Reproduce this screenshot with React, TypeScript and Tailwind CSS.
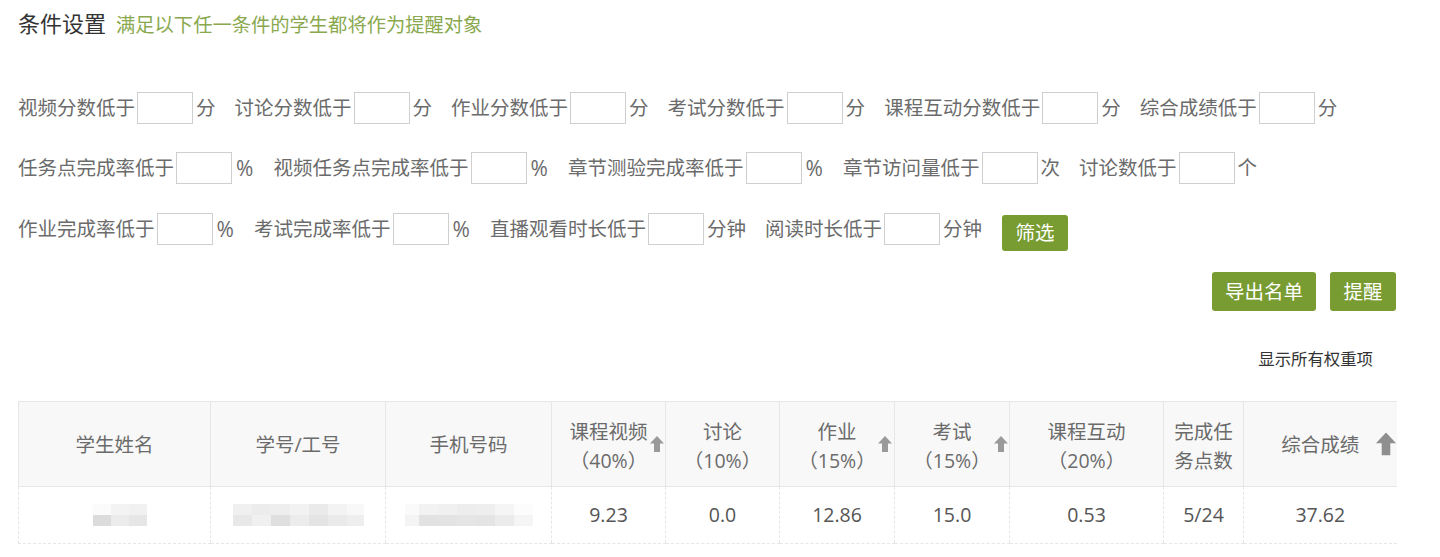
import React from "react";

type Group = { label: string; unit: string };

const rows: Group[][] = [
  [
    { label: "视频分数低于", unit: "分" },
    { label: "讨论分数低于", unit: "分" },
    { label: "作业分数低于", unit: "分" },
    { label: "考试分数低于", unit: "分" },
    { label: "课程互动分数低于", unit: "分" },
    { label: "综合成绩低于", unit: "分" },
  ],
  [
    { label: "任务点完成率低于", unit: "%" },
    { label: "视频任务点完成率低于", unit: "%" },
    { label: "章节测验完成率低于", unit: "%" },
    { label: "章节访问量低于", unit: "次" },
    { label: "讨论数低于", unit: "个" },
  ],
  [
    { label: "作业完成率低于", unit: "%" },
    { label: "考试完成率低于", unit: "%" },
    { label: "直播观看时长低于", unit: "分钟" },
    { label: "阅读时长低于", unit: "分钟" },
  ],
];

function FilterGroup({ g }: { g: Group }) {
  return (
    <div className="flex items-center h-[32px]">
      <span className="leading-[32px] whitespace-nowrap">{g.label}</span>
      <input
        className="ml-[2px] w-[56px] h-[32px] border border-[#cfcfcf] bg-white outline-none"
        type="text"
      />
      {g.unit === "%" ? (
        <span className="ml-[4px] w-[18.5px] mr-[19px] leading-[32px] text-[21px]">%</span>
      ) : (
        <span className="ml-[3px] mr-[19px] leading-[32px] whitespace-nowrap">{g.unit}</span>
      )}
    </div>
  );
}

function SortArrow({ big }: { big?: boolean }) {
  return (
    <svg
      viewBox="0 0 14 16"
      className={big ? "w-[22px] h-[23px]" : "w-[14px] h-[16px]"}
    >
      <path d="M7 0 L14 7.5 L10 7.5 L10 16 L4 16 L4 7.5 L0 7.5 Z" fill={big ? "#8f8f8f" : "#9a9a9a"} />
    </svg>
  );
}

type Block = { w: number; c: string };

function Mosaic({ rows }: { rows: Block[][] }) {
  return (
    <div className="inline-flex flex-col">
      {rows.map((r, i) => (
        <div key={i} className="flex h-[11px]">
          {r.map((b, j) => (
            <div key={j} style={{ width: b.w, backgroundColor: b.c }} />
          ))}
        </div>
      ))}
    </div>
  );
}

const nameMosaic: Block[][] = [
  [
    { w: 18, c: "#fbfbfb" },
    { w: 18, c: "#f3f3f3" },
    { w: 18, c: "#f1f1f1" },
  ],
  [
    { w: 18, c: "#dcdcdc" },
    { w: 18, c: "#ececec" },
    { w: 18, c: "#e6e6e6" },
  ],
];

const idMosaic: Block[][] = [
  [
    { w: 19, c: "#f0f0f0" },
    { w: 19, c: "#ececec" },
    { w: 19, c: "#eeeeee" },
    { w: 19, c: "#f2f2f2" },
    { w: 19, c: "#eaeaea" },
    { w: 19, c: "#f3f3f3" },
    { w: 17, c: "#f8f8f8" },
  ],
  [
    { w: 19, c: "#e8e8e8" },
    { w: 19, c: "#f0f0f0" },
    { w: 19, c: "#dfdfdf" },
    { w: 19, c: "#ececec" },
    { w: 19, c: "#e4e4e4" },
    { w: 19, c: "#eaeaea" },
    { w: 17, c: "#eeeeee" },
  ],
];

const phoneMosaic: Block[][] = [
  [
    { w: 14, c: "#fafafa" },
    { w: 19, c: "#f2f2f2" },
    { w: 19, c: "#f0f0f0" },
    { w: 19, c: "#ededed" },
    { w: 19, c: "#eeeeee" },
    { w: 19, c: "#f5f5f5" },
    { w: 19, c: "#fcfcfc" },
  ],
  [
    { w: 14, c: "#f4f4f4" },
    { w: 19, c: "#e2e2e2" },
    { w: 19, c: "#e3e3e3" },
    { w: 19, c: "#e5e5e5" },
    { w: 19, c: "#e4e4e4" },
    { w: 19, c: "#ebebeb" },
    { w: 19, c: "#f5f5f5" },
  ],
];

const colWidths = [192, 175, 166, 114, 114, 115, 115, 154, 80, 153];

export default function App() {
  const font = { fontFamily: '"Open Sans", "Noto Sans CJK SC", sans-serif' };
  return (
    <div className="bg-white min-h-[557px] text-[#6b6b6b]" style={font}>
      <div className="ml-[18px] w-[1378px] pt-[8px]">
        {/* Title */}
        <div className="flex items-baseline h-[30px]">
          <span className="text-[22px] leading-[30px] text-[#333]">条件设置</span>
          <span className="ml-[10px] text-[19.3px] text-[#8aa94f]">满足以下任一条件的学生都将作为提醒对象</span>
        </div>

        {/* Filters */}
        <div className="text-[19.5px]">
          <div className="mt-[54px] flex">
            {rows[0].map((g) => (
              <FilterGroup key={g.label} g={g} />
            ))}
          </div>
          <div className="mt-[28px] flex">
            {rows[1].map((g) => (
              <FilterGroup key={g.label} g={g} />
            ))}
          </div>
          <div className="mt-[29px] flex items-start">
            {rows[2].map((g) => (
              <FilterGroup key={g.label} g={g} />
            ))}
            <button className="ml-[1px] mt-[2px] w-[66px] h-[36px] rounded-[3px] bg-[#789c31] text-white text-[19.5px] leading-[36px]">
              筛选
            </button>
          </div>
        </div>

        {/* Actions */}
        <div className="mt-[21px] flex justify-end gap-[14px]">
          <button className="w-[104px] h-[39px] rounded-[3px] bg-[#789c31] text-white text-[19.5px]">
            导出名单
          </button>
          <button className="w-[66px] h-[39px] rounded-[3px] bg-[#789c31] text-white text-[19.5px]">
            提醒
          </button>
        </div>

        <div className="mt-[36px] flex justify-end pr-[23px]">
          <span className="text-[16.4px] leading-[24px] text-[#333]">显示所有权重项</span>
        </div>

        {/* Table */}
        <table className="mt-[30px] w-[1378px] table-fixed border-collapse">
          <colgroup>
            {colWidths.map((w, i) => (
              <col key={i} style={{ width: w }} />
            ))}
          </colgroup>
          <thead>
            <tr className="bg-[#f8f8f8] h-[85px] text-[19.5px] leading-[29px] text-[#6b6b6b]">
              <th className="font-normal border-t border-b border-l border-[#e6e6e6]">学生姓名</th>
              <th className="font-normal border-t border-b border-l border-[#e6e6e6]">学号/工号</th>
              <th className="font-normal border-t border-b border-l border-[#e6e6e6]">手机号码</th>
              <th className="font-normal border-t border-b border-l border-[#e6e6e6] relative">
                <div className="pt-[3px]">
                  课程视频
                  <br />
                  （40%）
                </div>
                <span className="absolute right-[1px] top-1/2 -translate-y-1/2 flex">
                  <SortArrow />
                </span>
              </th>
              <th className="font-normal border-t border-b border-l border-[#e6e6e6]">
                <div className="pt-[3px]">
                  讨论
                  <br />
                  （10%）
                </div>
              </th>
              <th className="font-normal border-t border-b border-l border-[#e6e6e6] relative">
                <div className="pt-[3px]">
                  作业
                  <br />
                  （15%）
                </div>
                <span className="absolute right-[2px] top-1/2 -translate-y-1/2 flex">
                  <SortArrow />
                </span>
              </th>
              <th className="font-normal border-t border-b border-l border-[#e6e6e6] relative">
                <div className="pt-[3px]">
                  考试
                  <br />
                  （15%）
                </div>
                <span className="absolute right-[1px] top-1/2 -translate-y-1/2 flex">
                  <SortArrow />
                </span>
              </th>
              <th className="font-normal border-t border-b border-l border-[#e6e6e6]">
                <div className="pt-[3px]">
                  课程互动
                  <br />
                  （20%）
                </div>
              </th>
              <th className="font-normal border-t border-b border-l border-[#e6e6e6]">
                <div className="pt-[3px]">
                  完成任
                  <br />
                  务点数
                </div>
              </th>
              <th className="font-normal border-t border-b border-l border-[#e6e6e6] relative">
                综合成绩
                <span className="absolute right-0 top-1/2 -translate-y-1/2 flex">
                  <SortArrow big />
                </span>
              </th>
            </tr>
          </thead>
          <tbody>
            <tr className="h-[57px] text-[19.5px] text-[#555] text-center">
              <td className="border-b border-l border-dashed border-[#e6e6e6]">
                <div className="flex justify-center pl-[10px]">
                  <Mosaic rows={nameMosaic} />
                </div>
              </td>
              <td className="border-b border-l border-dashed border-[#e6e6e6]">
                <div className="flex justify-center">
                  <Mosaic rows={idMosaic} />
                </div>
              </td>
              <td className="border-b border-l border-dashed border-[#e6e6e6]">
                <div className="flex justify-center">
                  <Mosaic rows={phoneMosaic} />
                </div>
              </td>
              <td className="border-b border-l border-dashed border-[#e6e6e6]">9.23</td>
              <td className="border-b border-l border-dashed border-[#e6e6e6]">0.0</td>
              <td className="border-b border-l border-dashed border-[#e6e6e6]">12.86</td>
              <td className="border-b border-l border-dashed border-[#e6e6e6]">15.0</td>
              <td className="border-b border-l border-dashed border-[#e6e6e6]">0.53</td>
              <td className="border-b border-l border-dashed border-[#e6e6e6]">5/24</td>
              <td className="border-b border-l border-dashed border-[#e6e6e6]">37.62</td>
            </tr>
          </tbody>
        </table>
      </div>
    </div>
  );
}
